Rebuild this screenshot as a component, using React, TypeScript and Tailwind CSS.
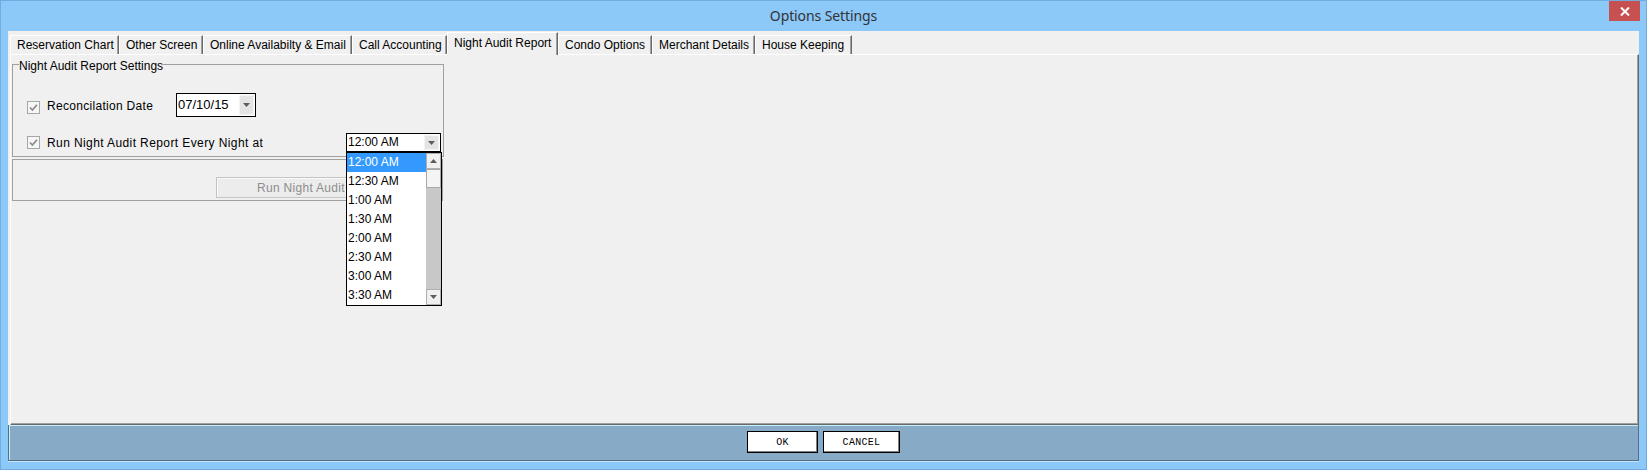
import React from 'react';

const SANS = "font-['Liberation_Sans',Arial,sans-serif]";

const tabs = [
  { label: 'Reservation Chart', w: 'w-[109px]' },
  { label: 'Other Screen', w: 'w-[84px]' },
  { label: 'Online Availabilty & Email', w: 'w-[149px]' },
  { label: 'Call Accounting', w: 'w-[95px]' },
  { label: 'Night Audit Report', w: 'w-[111px]', active: true },
  { label: 'Condo Options', w: 'w-[94px]' },
  { label: 'Merchant Details', w: 'w-[103px]' },
  { label: 'House Keeping', w: 'w-[97px]' },
];

const times = ['12:00 AM', '12:30 AM', '1:00 AM', '1:30 AM', '2:00 AM', '2:30 AM', '3:00 AM', '3:30 AM'];

function Down() {
  return (
    <svg width="7" height="4" viewBox="0 0 7 4">
      <path d="M0 0h7L3.5 4z" fill="#5c5c5c" />
    </svg>
  );
}

function Up() {
  return (
    <svg width="7" height="4" viewBox="0 0 7 4">
      <path d="M0 4h7L3.5 0z" fill="#5c5c5c" />
    </svg>
  );
}

function Check() {
  return (
    <div className="w-[13px] h-[13px] shrink-0 border border-[#a6a6a6] bg-[#f6f6f6] flex items-center justify-center">
      <svg width="9" height="9" viewBox="0 0 9 9">
        <path d="M1 4.5 L3.4 7 L8 1.8" fill="none" stroke="#8a8a8a" strokeWidth="1.7" />
      </svg>
    </div>
  );
}

function ComboButton() {
  return (
    <div className="w-[15px] shrink-0 self-stretch my-[1px] mr-[1px] bg-[#e4e4e4] border border-[#f4f4f4] flex items-center justify-center">
      <Down />
    </div>
  );
}

export default function App() {
  return (
    <div className={`w-[1647px] h-[470px] bg-[#8cc8f8] border border-[#72abe0] flex flex-col ${SANS} text-black overflow-hidden`}>
      {/* Title bar */}
      <div className="h-[30px] shrink-0 grid grid-cols-[1fr_auto_1fr]">
        <div />
        <div className="self-center font-['Noto_Sans',sans-serif] text-[14px] leading-[20px] text-[#333333] tracking-[-0.1px]">
          Options Settings
        </div>
        <div className="flex justify-end items-start pr-[6px]">
          <div className="w-[31px] h-[20px] bg-[#c75050] flex items-center justify-center">
            <svg width="10" height="9" viewBox="0 0 10 9">
              <path d="M1 0.5 L9 8.5 M9 0.5 L1 8.5" stroke="#ffffff" strokeWidth="2" />
            </svg>
          </div>
        </div>
      </div>

      {/* Body */}
      <div className="mx-[7px] h-[394px] shrink-0 bg-[#f0f0f0] flex flex-col pl-[2px]">
        {/* Tab strip */}
        <div className="h-[23px] shrink-0 flex items-end text-[12px]">
          {tabs.map((t) =>
            t.active ? (
              <div
                key={t.label}
                className={`${t.w} h-[23px] -mb-px relative z-10 bg-[#f0f0f0] border-l border-t border-l-white border-t-white border-r border-r-[#696969] shadow-[inset_-1px_0_0_#a0a0a0] pl-[6px] leading-[20px] whitespace-nowrap`}
              >
                {t.label}
              </div>
            ) : (
              <div
                key={t.label}
                className={`${t.w} h-[19px] border-l border-t border-l-white border-t-white border-r border-r-[#696969] shadow-[inset_-1px_0_0_#a0a0a0] pl-[6px] leading-[18px] whitespace-nowrap`}
              >
                {t.label}
              </div>
            )
          )}
        </div>

        {/* Tab page */}
        <div className="flex-1 border border-l-white border-t-white border-r-[#696969] border-b-[#696969] shadow-[inset_-1px_-1px_0_#a0a0a0]">
          <fieldset className="ml-[1px] mt-[1px] w-[432px] border border-[#a0a0a0] p-0 pb-[4px] m-0">
            <legend className="ml-[6px] pt-[3px] text-[12px] leading-[14px]">Night Audit Report Settings</legend>

            {/* Row 1 */}
            <div className="mt-[20px] h-[24px] flex items-center pl-[14px]">
              <div className="mt-[4px]">
                <Check />
              </div>
              <div className="ml-[7px] w-[129px] mt-[2px] text-[12px] tracking-[0.3px] leading-[14px]">Reconcilation Date</div>
              <div className="w-[80px] h-[24px] border border-black bg-white flex items-stretch">
                <div className="flex-1 pl-[1px] text-[13px] leading-[22px]">07/10/15</div>
                <ComboButton />
              </div>
            </div>

            {/* Row 2 */}
            <div className="mt-[16px] h-[19px] flex items-center pl-[14px]">
              <Check />
              <div className="ml-[7px] w-[299px] text-[12px] tracking-[0.4px] leading-[14px] whitespace-nowrap">Run Night Audit Report Every Night at</div>
              <div className="relative w-[95px] h-[19px]">
                <div className="w-full h-full border border-black bg-white flex items-stretch">
                  <div className="flex-1 pl-[1px] text-[12px] leading-[17px]">12:00 AM</div>
                  <ComboButton />
                </div>
                {/* Dropdown list */}
                <div className="absolute top-full left-0 w-[96px] h-[154px] z-20 border border-black bg-white flex">
                  <div className="w-[79px] flex flex-col">
                    {times.map((t, i) => (
                      <div
                        key={t}
                        className={`h-[19px] pl-[1px] text-[12px] leading-[19px] ${i === 0 ? 'bg-[#3399ff] text-white' : 'text-black'}`}
                      >
                        {t}
                      </div>
                    ))}
                  </div>
                  <div className="w-[15px] flex flex-col bg-[#c8c8c8]">
                    <div className="h-[16px] bg-[#f0f0f0] border border-[#b0b0b0] flex items-center justify-center">
                      <Up />
                    </div>
                    <div className="h-[19px] bg-[#f4f4f4] border border-[#a8a8a8]" />
                    <div className="flex-1" />
                    <div className="h-[16px] bg-[#f0f0f0] border border-[#b0b0b0] flex items-center justify-center">
                      <Down />
                    </div>
                  </div>
                </div>
              </div>
            </div>
          </fieldset>

          {/* Second box with button (partly hidden under the open list) */}
          <div className="ml-[1px] mt-[2px] w-[431px] h-[42px] border border-[#a0a0a0] pl-[203px] pt-[17px]">
            <div className="w-[130px] h-[21px] overflow-hidden border border-r-0 border-[#c4c4c4] bg-[#ececec] shadow-[inset_1px_1px_0_#fafafa] flex items-center pl-[40px] text-[12px] text-[#8d8d8d] tracking-[0.3px] whitespace-nowrap">
              Run Night Audit
            </div>
          </div>
        </div>
      </div>

      {/* Bottom panel */}
      <div className="mx-[7px] h-[36px] shrink-0 bg-[#87aac6] border-l border-r border-b border-[#5a6f7e] shadow-[inset_1px_1px_0_#c2f0ff,0_1px_0_#c0e6ff] flex justify-center items-start gap-[5px] pt-[6px]">
        <div className="w-[71px] h-[22px] bg-white border border-black shadow-[inset_-1px_-1px_0_#808080] flex items-center justify-center font-['Liberation_Mono',monospace] text-[10px] tracking-[0.3px]">
          OK
        </div>
        <div className="w-[77px] h-[22px] bg-white border border-black shadow-[inset_-1px_-1px_0_#808080] flex items-center justify-center font-['Liberation_Mono',monospace] text-[10px] tracking-[0.3px]">
          CANCEL
        </div>
      </div>
    </div>
  );
}
